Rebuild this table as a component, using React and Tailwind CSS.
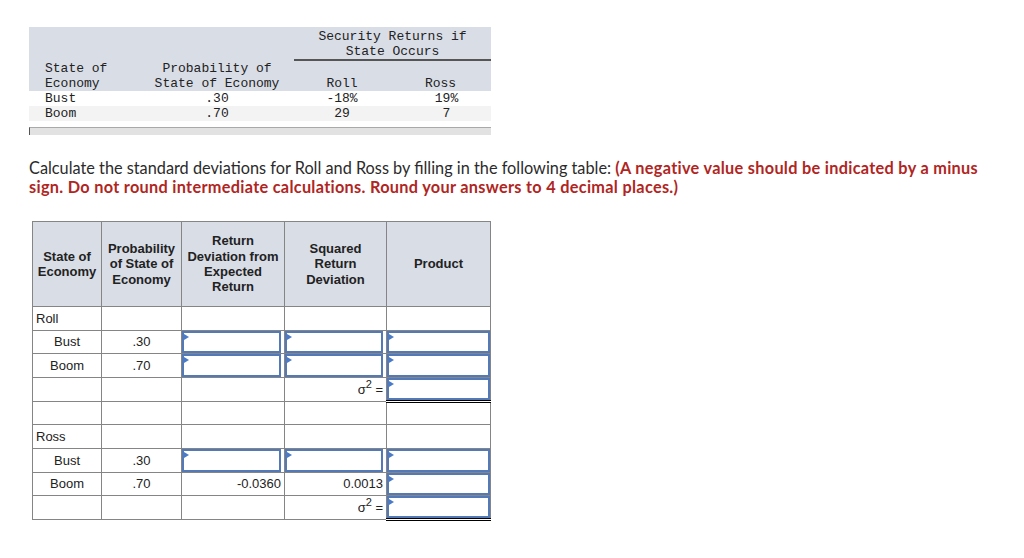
const Tri = () => (
  <span className="absolute left-[0px] top-[1px] w-0 h-0 border-y-[3.5px] border-y-transparent border-l-[5px] border-l-[#4a7bc8]" />
);

const Input = () => (
  <div className="relative h-full w-full border-2 border-[#5379b6] bg-white">
    <Tri />
  </div>
);

const Sigma = () => (
  <span>
    σ<sup className="text-[11px] -top-[6px]">2</sup> =
  </span>
);

const cell = "border border-[#858585] h-[23.67px] p-0 text-[13px] leading-[15px] text-[#222]";

const PricingRows = ({ label, rows }) => (
  <>
    <tr>
      <td className={`${cell} pl-[3px] text-left`}>{label}</td>
      <td className={cell}></td>
      <td className={cell}></td>
      <td className={cell}></td>
      <td className={cell}></td>
    </tr>
    {rows.map((r) => (
      <tr key={r.state}>
        <td className={`${cell} text-center`}>{r.state}</td>
        <td className={`${cell} text-center`}>{r.prob}</td>
        <td className={`${cell} text-right pr-[3px]`}>{r.dev ?? <Input />}</td>
        <td className={`${cell} text-right pr-[3px]`}>{r.sq ?? <Input />}</td>
        <td className={cell}>
          <Input />
        </td>
      </tr>
    ))}
    <tr>
      <td className={cell}></td>
      <td className={cell}></td>
      <td className={cell}></td>
      <td className={`${cell} text-right pr-[3px]`}>
        <Sigma />
      </td>
      <td className={`${cell} border-b-[3px] border-b-black`} style={{ borderBottomStyle: "double" }}>
        <Input />
      </td>
    </tr>
  </>
);

export default function App() {
  return (
    <div className="w-[1024px] h-[558px] bg-white pl-[29px] pt-[27px] overflow-hidden">
      {/* given data */}
      <div className="w-[462px] font-['Liberation_Mono',monospace] text-[13px] leading-[15px] text-[#222]">
        <div className="bg-[#d9dde6] pt-[2px]">
          <div className="flex h-[32px]">
            <div className="w-[265px]" />
            <div className="w-[197px] border-b-2 border-[#555] text-center">
              Security Returns if
              <br />
              State Occurs
            </div>
          </div>
          <div className="flex h-[30px] items-end">
            <div className="w-[111px] pl-[16px]">
              State of
              <br />
              Economy
            </div>
            <div className="w-[154px] text-center">
              Probability of
              <br />
              State of Economy
            </div>
            <div className="w-[96px] text-center">Roll</div>
            <div className="w-[101px] text-center">Ross</div>
          </div>
        </div>
        <div className="flex h-[15px] bg-white">
          <div className="w-[111px] pl-[16px]">Bust</div>
          <div className="w-[154px] text-center">.30</div>
          <div className="w-[96px] text-center">-18%</div>
          <div className="w-[101px] text-center pl-[12px]">19%</div>
        </div>
        <div className="flex h-[15px] bg-[#f3f3f3]">
          <div className="w-[111px] pl-[16px]">Boom</div>
          <div className="w-[154px] text-center">.70</div>
          <div className="w-[96px] text-center">
            <span className="invisible">-</span>29<span className="invisible">%</span>
          </div>
          <div className="w-[101px] text-center pl-[12px]">
            <span className="invisible">1</span>7<span className="invisible">%</span>
          </div>
        </div>
        <div className="mt-[6px] h-[8px] bg-[#e2e2e2] border-t border-[#a9a9a9] border-l border-l-[#555]" />
      </div>

      <p className="mt-[23px] w-[980px] font-['Lato',sans-serif] text-[16.3px] leading-[19px] text-[#2b2b2b]">
        Calculate the standard deviations for Roll and Ross by filling in the following table:{" "}
        <span className="font-bold text-[#b0261f] tracking-[0.3px]">
          (A negative value should be indicated by a minus
          <br />
          sign. Do not round intermediate calculations. Round your answers to 4 decimal places.)
        </span>
      </p>

      <table className="mt-[25px] ml-[3px] border-collapse table-fixed w-[458px] font-['Liberation_Sans',Arial,sans-serif]">
        <colgroup>
          <col className="w-[69px]" />
          <col className="w-[80px]" />
          <col className="w-[103px]" />
          <col className="w-[102px]" />
          <col className="w-[104px]" />
        </colgroup>
        <thead>
          <tr className="bg-[#d9dde6] text-[13px] leading-[15.3px] font-bold text-[#222]">
            <th className="border border-[#858585] h-[85px] px-0">State of Economy</th>
            <th className="border border-[#858585] px-0">
              Probability
              <br />
              of State of
              <br />
              Economy
            </th>
            <th className="border border-[#858585] px-0">
              Return
              <br />
              Deviation from
              <br />
              Expected
              <br />
              Return
            </th>
            <th className="border border-[#858585] px-0">
              Squared
              <br />
              Return
              <br />
              Deviation
            </th>
            <th className="border border-[#858585] px-0">Product</th>
          </tr>
        </thead>
        <tbody>
          <PricingRows
            label="Roll"
            rows={[
              { state: "Bust", prob: ".30" },
              { state: "Boom", prob: ".70" },
            ]}
          />
          <tr>
            <td className={cell}></td>
            <td className={cell}></td>
            <td className={cell}></td>
            <td className={cell}></td>
            <td className={cell}></td>
          </tr>
          <PricingRows
            label="Ross"
            rows={[
              { state: "Bust", prob: ".30" },
              { state: "Boom", prob: ".70", dev: "-0.0360", sq: "0.0013" },
            ]}
          />
        </tbody>
      </table>
    </div>
  );
}
